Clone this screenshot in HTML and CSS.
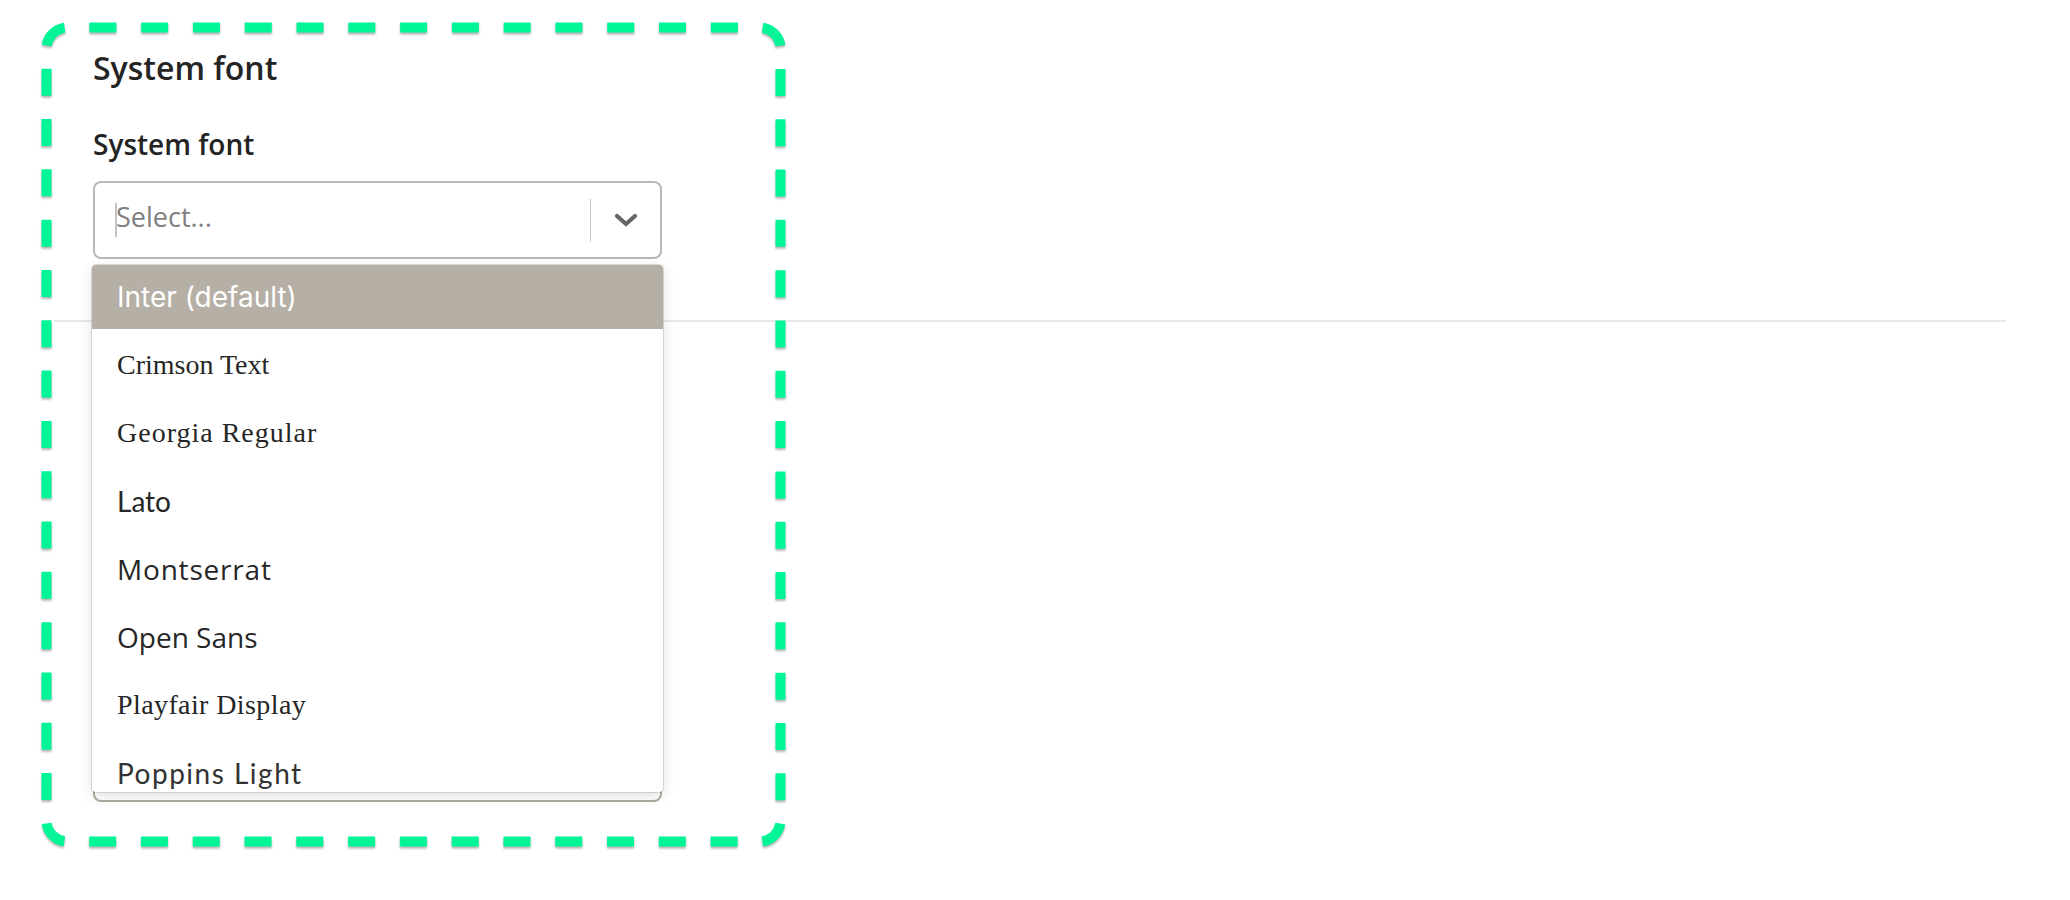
FILE: index.html
```html
<!DOCTYPE html>
<html lang="en">
<head>
<meta charset="utf-8">
<title>System font</title>
<link rel="stylesheet" href="styles.css">
</head>
<body>
<div class="page">
  <section class="section">
    <h2 class="title">System font</h2>
    <div class="label">System font</div>
    <div class="field">
      <div class="control">
        <div class="value-area">
          <span class="caret"></span><span class="placeholder">Select...</span>
        </div>
        <span class="separator"></span>
        <span class="indicator">
          <svg width="24" height="14" viewBox="0 0 24 14"><polyline points="3,3 12,11 21,3" fill="none" stroke="#666" stroke-width="4.2" stroke-linecap="round" stroke-linejoin="miter"/></svg>
        </span>
      </div>
      <div class="menu">
        <div class="option selected f-inter">Inter (default)</div>
        <div class="option f-crimson">Crimson Text</div>
        <div class="option f-georgia">Georgia Regular</div>
        <div class="option f-lato">Lato</div>
        <div class="option f-montserrat">Montserrat</div>
        <div class="option f-opensans">Open Sans</div>
        <div class="option f-playfair">Playfair Display</div>
        <div class="option f-poppins">Poppins Light</div>
      </div>
    </div>
  </section>
  <hr class="divider">
  <section class="section">
    <div class="next-control"></div>
  </section>
  <svg class="outline" width="743" height="823" viewBox="0 0 743 823">
    <g fill="none" stroke="#00f596" stroke-width="10" stroke-linecap="butt">
      <path class="dash-h" d="M10.65,10.65 A21,21 0 0 1 25.5,4.5 L717.5,4.5 A21,21 0 0 1 732.35,10.65"/>
      <path class="dash-v" d="M732.35,10.65 A21,21 0 0 1 738.5,25.5 L738.5,797.5 A21,21 0 0 1 732.35,812.35"/>
      <path class="dash-h" d="M732.35,812.35 A21,21 0 0 1 717.5,818.5 L25.5,818.5 A21,21 0 0 1 10.65,812.35"/>
      <path class="dash-v" d="M10.65,812.35 A21,21 0 0 1 4.5,797.5 L4.5,25.5 A21,21 0 0 1 10.65,10.65"/>
    </g>
  </svg>
</div>
</body>
</html>
```
FILE: styles.css
```css
html, body {
  margin: 0;
  background: #ffffff;
}
body {
  font-family: "Open Sans", "Liberation Sans", sans-serif;
  color: #222222;
}
.page {
  position: relative;
  padding: 46px 64px 0 54px;
  min-height: 854px;
  box-sizing: border-box;
}
.section {
  padding-left: 39px;
}
.title {
  margin: 0;
  font-size: 32px;
  font-weight: 600;
  line-height: 44px;
  color: #242424;
}
.label {
  margin-top: 35px;
  font-size: 28px;
  font-weight: 600;
  line-height: 38px;
  color: #242424;
}
.field {
  position: relative;
  z-index: 2;
  width: 569px;
  margin-top: 18px;
}
.control {
  box-sizing: border-box;
  height: 78px;
  border: 2px solid #b8b8b8;
  border-radius: 8px;
  background: #fff;
  display: flex;
  align-items: center;
}
.value-area {
  flex: 1;
  display: flex;
  align-items: center;
  padding-left: 20px;
}
.caret {
  display: inline-block;
  width: 2px;
  height: 34px;
  background: #c4c4c4;
  margin-right: -1px;
}
.placeholder {
  font-size: 27px;
  color: #808080;
  line-height: 38px;
  margin-top: -7px;
}
.separator {
  width: 1px;
  height: 43px;
  background: #c8c8c8;
}
.indicator {
  width: 69px;
  display: flex;
  justify-content: center;
  align-items: center;
}
.indicator svg {
  display: block;
}
.menu {
  position: absolute;
  top: calc(100% + 6px);
  left: -1px;
  width: 571px;
  height: 527px;
  overflow: hidden;
  background: #fff;
  border-radius: 4px;
  box-shadow: 0 0 0 1px rgba(0, 0, 0, 0.12), 0 4px 14px rgba(0, 0, 0, 0.12);
}
.option {
  box-sizing: border-box;
  height: 68px;
  padding: 3px 0 0 25px;
  display: flex;
  align-items: center;
  font-size: 28px;
  color: #262626;
  white-space: nowrap;
}
.option.selected {
  height: 64px;
  padding-top: 0;
  background: #b5afa5;
  color: #ffffff;
}
.f-inter { font-family: "Inter", sans-serif; }
.f-crimson { font-family: "Liberation Serif", serif; }
.f-georgia { font-family: "Liberation Serif", serif; letter-spacing: 1px; }
.f-lato { font-family: "Lato", sans-serif; }
.f-montserrat { font-family: "Open Sans", sans-serif; font-weight: 400; letter-spacing: 0.8px; }
.f-opensans { font-family: "Open Sans", sans-serif; }
.f-playfair { font-family: "Liberation Serif", serif; letter-spacing: 0.4px; }
.f-poppins { font-family: "Lato", sans-serif; font-weight: 400; letter-spacing: 1.5px; color: #333; }
.divider {
  margin: 61px 0 0;
  border: 0;
  height: 2px;
  background: #e8e8e8;
}
.next-control {
  box-sizing: border-box;
  width: 569px;
  height: 78px;
  margin-top: 402px;
  border: 2px solid #b0aaa2;
  border-radius: 8px;
}
.outline {
  position: absolute;
  left: 42px;
  top: 23px;
  overflow: visible;
  filter: drop-shadow(0 2px 1px rgba(0, 0, 0, 0.3));
  pointer-events: none;
  z-index: 5;
}
.dash-h {
  stroke-dasharray: 27 24.785;
  stroke-dashoffset: 13.5;
}
.dash-v {
  stroke-dasharray: 27 23.31;
  stroke-dashoffset: 13.5;
}
```
